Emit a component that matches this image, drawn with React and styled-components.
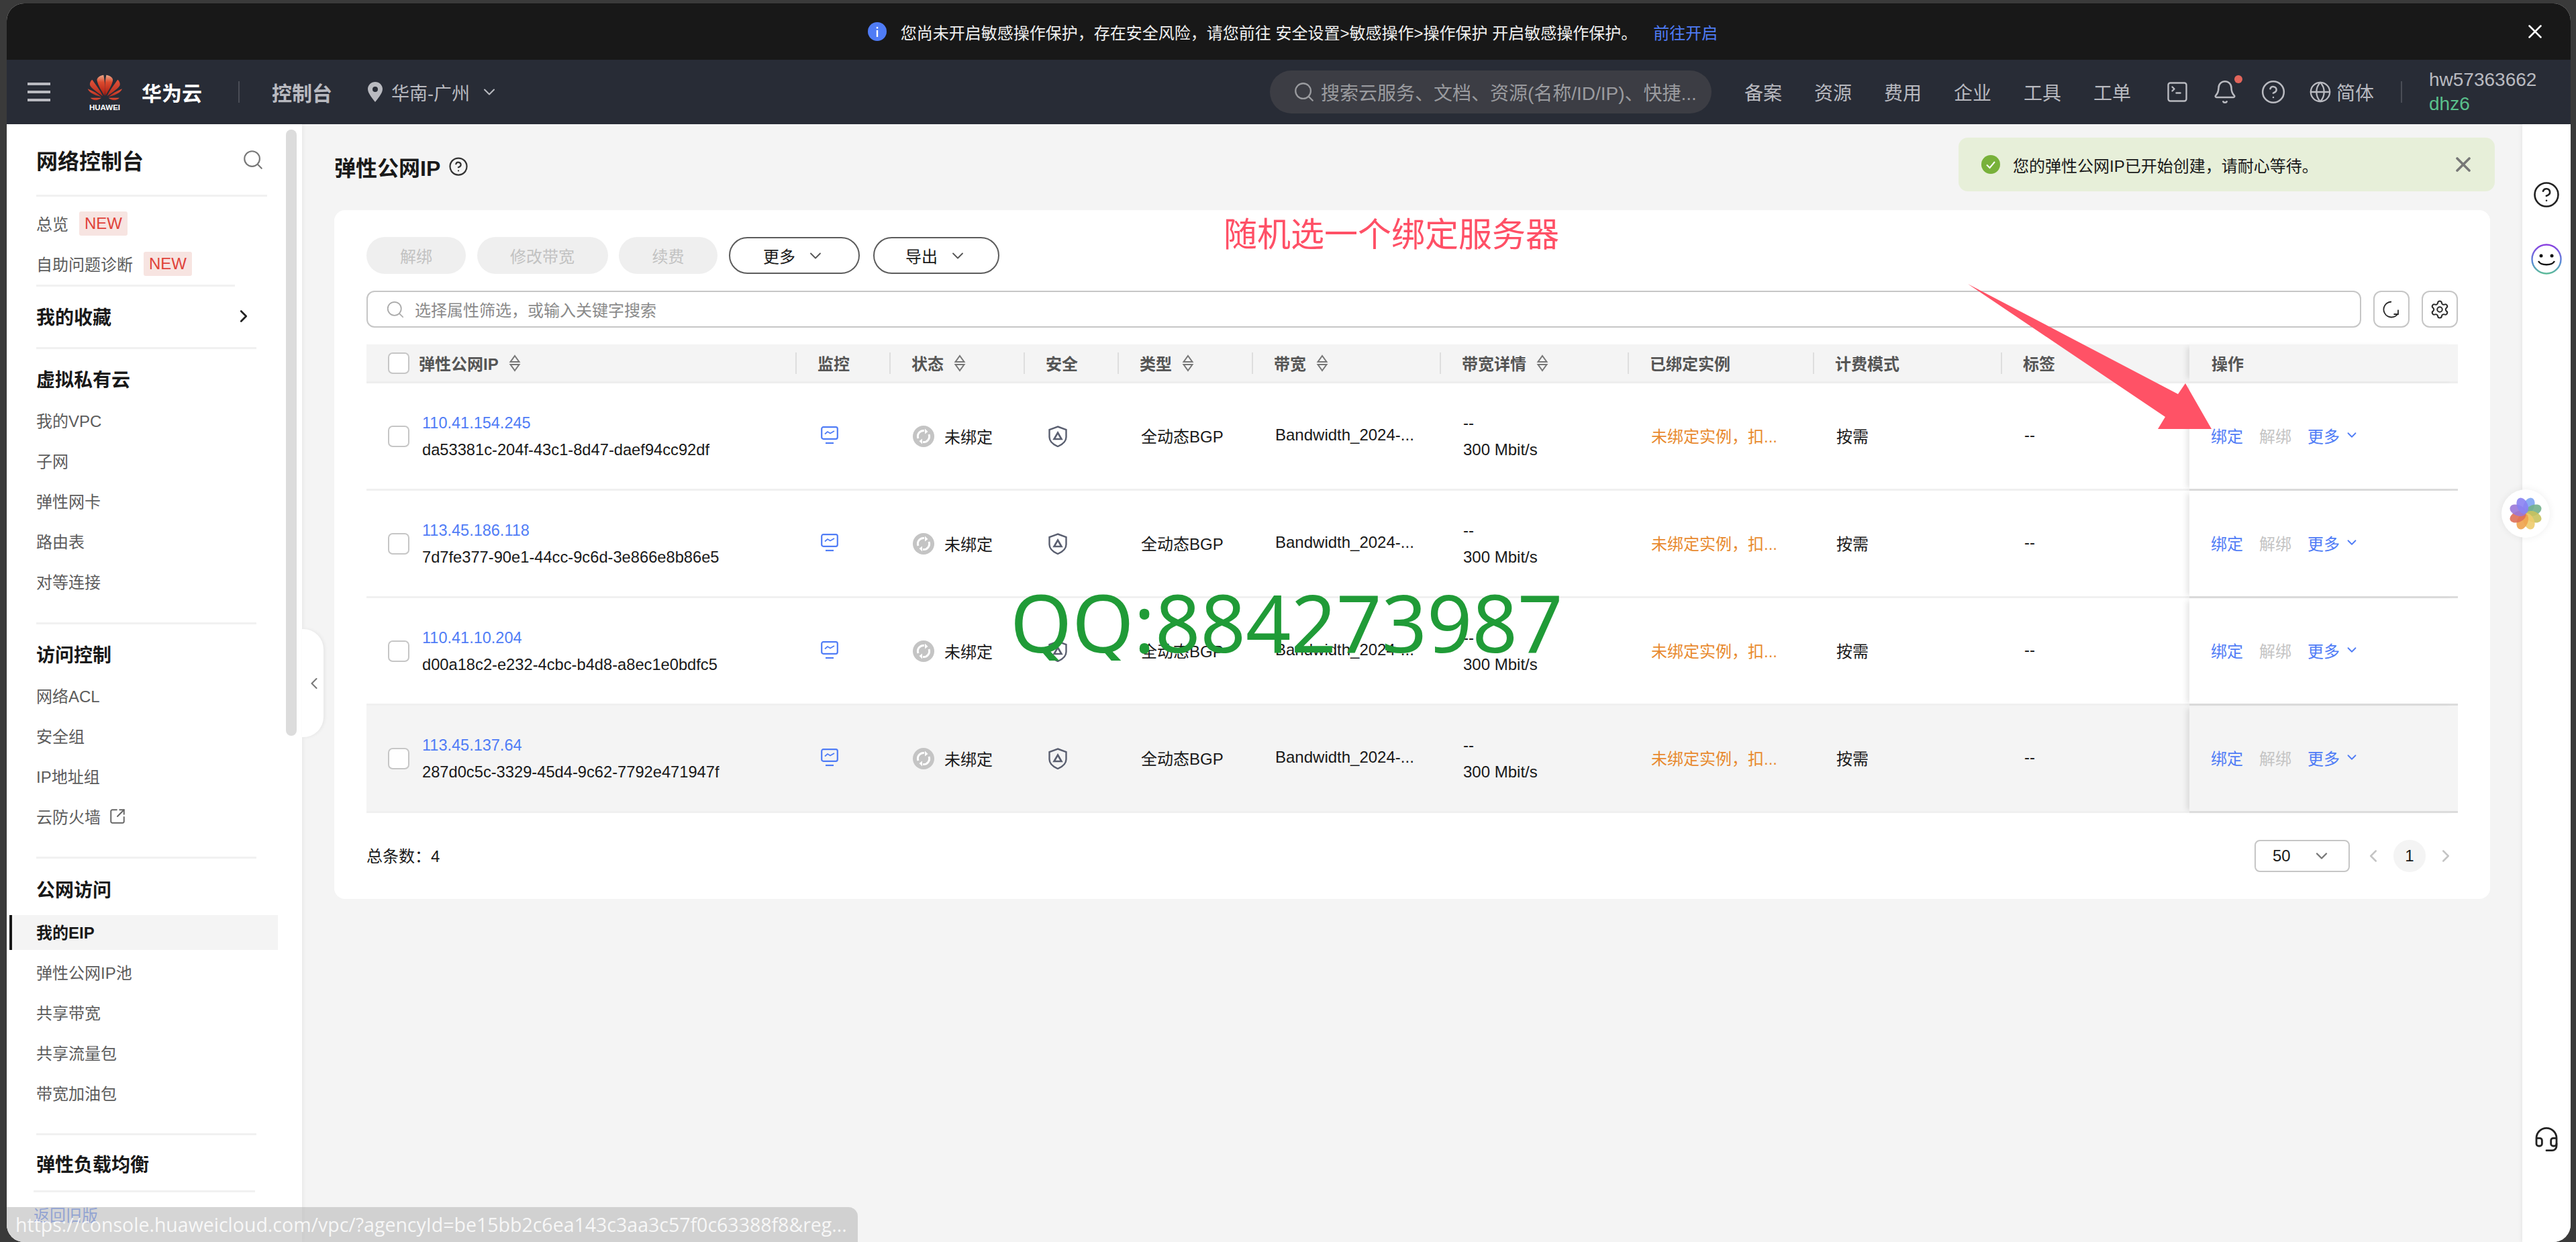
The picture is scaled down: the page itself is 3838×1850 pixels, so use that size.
import React from "react";
import styled, { createGlobalStyle } from "styled-components";
import {
  Search,
  ChevronDown,
  ChevronLeft,
  ChevronRight,
  CircleHelp,
  Globe,
  Bell,
  SquareTerminal,
  X,
  SquareArrowOutUpRight,
  Settings,
  Headset,
} from "lucide-react";

const FONT = '"Liberation Sans", "Noto Sans CJK SC", sans-serif';

const GlobalStyle = createGlobalStyle`
  html, body {
    margin: 0;
    padding: 0;
    background: #3a3a3a;
    font-family: ${FONT};
  }
  * { box-sizing: border-box; }
`;

const Frame = styled.div`
  position: relative;
  width: 3838px;
  height: 1850px;
  padding: 5px 8px 0 10px;
  background: #3a3a3a;
  overflow: hidden;
`;

const Shell = styled.div`
  position: relative;
  display: flex;
  flex-direction: column;
  height: 1845px;
  border-radius: 26px;
  overflow: hidden;
  background: #f4f4f4;
`;

/* top notice */
const Notice = styled.div`
  position: relative;
  flex: none;
  height: 84px;
  display: flex;
  align-items: center;
  justify-content: center;
  padding-left: 12px;
  background: #181818;
  color: #f0f0f0;
  font-size: 24px;
`;

const NoticeText = styled.span`
  margin-left: 21px;
`;

const NoticeLink = styled.span`
  margin-left: 24px;
  color: #4f7cf6;
`;

const NoticeClose = styled.span`
  position: absolute;
  right: 36px;
  top: 25px;
  display: flex;
  color: #fff;
`;

/* header */
const Header = styled.header`
  flex: none;
  height: 96px;
  display: flex;
  align-items: center;
  padding: 0 49px 0 31px;
  background: #282c36;
  color: #b9bac0;
  font-size: 28px;
`;

const Burger = styled.div`
  display: flex;
  flex-direction: column;
  justify-content: space-between;
  width: 34px;
  height: 28px;
  span {
    height: 4px;
    background: #b9bac0;
  }
`;

const LogoBox = styled.div`
  display: flex;
  flex-direction: column;
  align-items: center;
  width: 54px;
  margin-left: 54px;
  margin-top: 2px;
`;

const LogoWord = styled.span`
  margin-top: 3px;
  color: #fff;
  font-size: 11.5px;
  line-height: 12px;
  font-weight: 700;
`;

const Brand = styled.span`
  margin-left: 28px;
  color: #fff;
  font-size: 30px;
  font-weight: 700;
`;

const VLine = styled.i`
  display: block;
  width: 2px;
  height: 32px;
  background: #4a4d56;
  margin: ${(p) => p.$margin};
`;

const Console = styled.span`
  font-size: 30px;
  font-weight: 700;
`;

const Region = styled.div`
  display: flex;
  align-items: center;
  margin-left: 53px;
  font-size: 27px;
`;

const RegionName = styled.span`
  margin: 0 15px 0 13px;
`;

const SearchPill = styled.div`
  display: flex;
  align-items: center;
  gap: 8px;
  width: 658px;
  height: 64px;
  margin-left: auto;
  padding-left: 34px;
  border-radius: 32px;
  background: #3c3d44;
  color: #9a9b9f;
  white-space: nowrap;
`;

const NavLinks = styled.nav`
  display: flex;
  gap: 48px;
  margin-left: 49px;
`;

const HeaderIcons = styled.div`
  display: flex;
  align-items: center;
  gap: 34px;
  margin-left: 51px;
`;

const BellWrap = styled.div`
  position: relative;
  display: flex;
`;

const BellDot = styled.i`
  position: absolute;
  right: -7px;
  top: -6px;
  width: 12px;
  height: 12px;
  border-radius: 50%;
  background: #e2655b;
`;

const Lang = styled.div`
  display: flex;
  align-items: center;
  gap: 7px;
`;

const UserBox = styled.div`
  width: 162px;
  line-height: 36px;
`;

const UserSub = styled.div`
  color: #5ac08c;
`;

/* body */
const Body = styled.div`
  position: relative;
  flex: 1;
  min-height: 0;
  display: flex;
`;

const Sidebar = styled.aside`
  position: relative;
  flex: none;
  width: 440px;
  background: #fff;
  box-shadow: 2px 0 6px rgba(0, 0, 0, 0.05);
  overflow: hidden;
`;

const ScrollThumb = styled.i`
  position: absolute;
  left: 416px;
  top: 8px;
  width: 16px;
  height: 903px;
  border-radius: 8px;
  background: #dcdcdc;
`;

const SideHead = styled.div`
  display: flex;
  align-items: center;
  justify-content: space-between;
  height: 105px;
  padding: 0 56px 0 44px;
  color: #191919;
  font-size: 32px;
  font-weight: 700;
`;

const Divider = styled.div`
  width: ${(p) => p.$width}px;
  height: 3px;
  margin-left: ${(p) => p.$left || 44}px;
  background: #f1f1f1;
`;

const SideItem = styled.div`
  display: flex;
  align-items: center;
  gap: ${(p) => p.$gap || 16}px;
  height: 60px;
  padding: 0 0 3px 44px;
  color: #5c5c5c;
  font-size: 24px;
`;

const ActiveItem = styled.div`
  display: flex;
  align-items: center;
  width: 400px;
  height: 52px;
  margin: 4px 0 4px 4px;
  padding: 0 0 3px 36px;
  border-left: 4px solid #191919;
  background: #f4f4f4;
  color: #191919;
  font-size: 24px;
  font-weight: 700;
`;

const NewTag = styled.span`
  display: flex;
  align-items: center;
  justify-content: center;
  width: 72px;
  height: 36px;
  border-radius: 3px;
  background: #f7e4e1;
  color: #e0423a;
  font-size: 24px;
`;

const SideGroupTitle = styled.div`
  display: flex;
  align-items: center;
  justify-content: space-between;
  height: ${(p) => p.$height ?? 64}px;
  margin-top: ${(p) => p.$top ?? 13}px;
  padding: 0 72px 3px 44px;
  color: #191919;
  font-size: 28px;
  font-weight: 700;
`;

const SideGap = styled.div`
  height: ${(p) => p.$h}px;
`;

const OldVersion = styled.div`
  margin: 15px 0 0 40px;
  color: #4f7cf6;
  font-size: 24px;
`;

const Handle = styled.div`
  position: absolute;
  left: 440px;
  top: 752px;
  display: flex;
  align-items: center;
  width: 32px;
  height: 161px;
  padding-left: 4px;
  border-radius: 0 30px 30px 0;
  background: #fff;
  color: #777;
  box-shadow: 2px 0 5px rgba(0, 0, 0, 0.06);
`;

/* main */
const Main = styled.main`
  position: relative;
  flex: 1;
  min-width: 0;
  padding: 0 48px;
`;

const TitleRow = styled.div`
  display: flex;
  align-items: center;
  gap: 12px;
  height: 128px;
  padding-bottom: 3px;
  color: #191919;
  font-size: 32px;
  font-weight: 700;
`;

const Toast = styled.div`
  position: absolute;
  left: 2468px;
  top: 20px;
  display: flex;
  align-items: center;
  width: 799px;
  height: 80px;
  padding: 0 29px 0 34px;
  border-radius: 14px;
  background: #e7efd9;
  color: #191919;
  font-size: 24px;
`;

const ToastText = styled.span`
  margin-left: 19px;
`;

const ToastClose = styled.span`
  display: flex;
  margin-left: auto;
  color: #777;
`;

const Card = styled.section`
  height: 1026px;
  padding: 40px 48px;
  border-radius: 16px;
  background: #fff;
`;

const Toolbar = styled.div`
  display: flex;
  gap: 16.5px;
`;

const PillButton = styled.button`
  display: flex;
  align-items: center;
  justify-content: center;
  gap: 16px;
  width: ${(p) => p.$width}px;
  height: 55px;
  margin-left: ${(p) => p.$left || 0}px;
  padding: 0;
  border: ${(p) => (p.$ghost ? "none" : "2.5px solid #5c5c5c")};
  border-radius: 28px;
  background: ${(p) => (p.$ghost ? "#efefef" : "#fff")};
  color: ${(p) => (p.$ghost ? "#c2c2c2" : "#191919")};
  font-family: ${FONT};
  font-size: 24px;
`;

const FilterRow = styled.div`
  display: flex;
  gap: 18px;
  margin-top: 25px;
`;

const FilterBox = styled.div`
  flex: 1;
  display: flex;
  align-items: center;
  gap: 14px;
  height: 55px;
  padding-left: 26px;
  border: 2.5px solid #c6c6c6;
  border-radius: 12px;
  color: #8a8a8a;
  font-size: 24px;
`;

const SquareButton = styled.div`
  display: flex;
  align-items: center;
  justify-content: center;
  width: 54px;
  height: 55px;
  border: 2.5px solid #c6c6c6;
  border-radius: 12px;
  color: #2a2a2a;
`;

const Table = styled.div`
  margin-top: 25px;
`;

const COLUMNS = "639px 140px 200px 140px 200px 280px 280px 276px 280px 281px 400px";

const HeadRow = styled.div`
  display: grid;
  grid-template-columns: ${COLUMNS};
  height: 58px;
  border-bottom: 3px solid #eeeeee;
  background: #f4f4f4;
`;

const HeadCell = styled.div`
  position: relative;
  display: flex;
  align-items: center;
  gap: 14px;
  padding-left: ${(p) => p.$pad || 33}px;
  color: #555;
  font-size: 24px;
  font-weight: 700;
  &::before {
    content: "";
    display: ${(p) => (p.$plain ? "none" : "block")};
    position: absolute;
    left: 0;
    top: 12px;
    height: 32px;
    width: 2px;
    background: #dedede;
  }
`;

const FixedHead = styled(HeadCell)`
  box-shadow: -8px 0 8px -4px rgba(0, 0, 0, 0.1);
  &::before {
    display: none;
  }
`;

const Check = styled.i`
  display: block;
  flex: none;
  width: 32px;
  height: 32px;
  border: 2.5px solid #c6c6c6;
  border-radius: 7px;
  background: #fff;
`;

const Row = styled.div`
  display: grid;
  grid-template-columns: ${COLUMNS};
  height: 160px;
  border-bottom: 3px solid #f0f0f0;
  background: ${(p) => (p.$hover ? "#f4f4f4" : "#fff")};
  color: #191919;
  font-size: 24px;
`;

const Cell = styled.div`
  display: flex;
  align-items: center;
  padding-left: ${(p) => p.$pad || 35}px;
  padding-bottom: ${(p) => (p.$lift ? 3 : 0)}px;
  white-space: nowrap;
`;

const IpCell = styled(Cell)`
  gap: 19px;
  padding-left: 32px;
`;

const Stack = styled.div`
  display: flex;
  flex-direction: column;
  line-height: 40px;
`;

const IpLink = styled.span`
  color: #4f7cf6;
  font-size: 23.5px;
`;

const IpId = styled.span`
  font-size: 23.7px;
`;

const StatusCell = styled(Cell)`
  gap: 15px;
`;

const OrangeText = styled.span`
  color: #e88a2e;
`;

const ActionCell = styled(Cell)`
  gap: 24px;
  margin-bottom: -3px;
  border-bottom: 3px solid #dcdcdc;
  box-shadow: -8px 0 8px -4px rgba(0, 0, 0, 0.1);
`;

const ActionLink = styled.span`
  display: flex;
  align-items: center;
  gap: 7px;
  color: ${(p) => (p.$off ? "#c4c4c4" : "#4f7cf6")};
`;

const Footer = styled.div`
  display: flex;
  align-items: center;
  margin-top: 40px;
  height: 48px;
  padding-right: 3px;
  color: #191919;
  font-size: 24px;
`;

const Total = styled.span`
  margin-bottom: 4px;
`;

const PageSelect = styled.div`
  display: flex;
  align-items: center;
  justify-content: space-between;
  width: 142px;
  height: 48px;
  margin-left: auto;
  padding: 0 26px 0 25px;
  border: 2.5px solid #c6c6c6;
  border-radius: 8px;
`;

const PageNum = styled.span`
  display: flex;
  align-items: center;
  justify-content: center;
  width: 48px;
  height: 48px;
  margin: 0 15px;
  border-radius: 50%;
  background: #f4f4f4;
`;

const PagerArrow = styled.span`
  display: flex;
  margin-left: ${(p) => p.$left || 0}px;
  color: #c4c4c4;
`;

/* right rail */
const Rail = styled.aside`
  flex: none;
  width: 72px;
  display: flex;
  flex-direction: column;
  align-items: center;
  padding: 84px 0 133px;
  background: #fff;
  box-shadow: -2px 0 5px rgba(0, 0, 0, 0.05);
`;

const RailTop = styled.div`
  display: flex;
  flex-direction: column;
  align-items: center;
  gap: 52px;
  color: #222;
`;

const RailBottom = styled.div`
  display: flex;
  margin-top: auto;
  color: #222;
`;

const FlowerButton = styled.div`
  position: absolute;
  right: 31px;
  top: 544px;
  display: flex;
  align-items: center;
  justify-content: center;
  width: 72px;
  height: 72px;
  border-radius: 50%;
  background: #fff;
  box-shadow: 0 0 12px rgba(0, 0, 0, 0.07);
`;

/* overlays */
const UrlBar = styled.div`
  position: absolute;
  left: 0;
  bottom: 0;
  width: 1268px;
  height: 52px;
  padding: 0 6px 0 13px;
  border-radius: 0 14px 0 0;
  background: rgba(188, 188, 188, 0.62);
  color: rgba(255, 255, 255, 0.85);
  font-family: "Open Sans", "Noto Sans", sans-serif;
  font-size: 28.5px;
  line-height: 52px;
  white-space: nowrap;
  overflow: hidden;
`;

const Note = styled.div`
  position: absolute;
  left: 1823px;
  top: 322px;
  color: #ff5066;
  font-size: 50px;
  line-height: 56px;
  white-space: nowrap;
`;

const ArrowMark = styled.svg`
  position: absolute;
  left: 0;
  top: 0;
  pointer-events: none;
`;

const Watermark = styled.div`
  position: absolute;
  left: 1505px;
  top: 884px;
  height: 100px;
  overflow: hidden;
  color: #209b37;
  font-family: "Noto Sans", sans-serif;
  font-size: 118px;
  line-height: 86px;
  white-space: nowrap;
`;

function HuaweiLogo() {
  const petals = [
    "M134 118 C118 92 100 62 101 46 C104 36 118 28 130 27 C136 55 138 90 134 118Z",
    "M127 120 C105 105 75 85 70 72 C68 62 74 52 80 48 C95 70 115 95 127 120Z",
    "M121 124 C100 118 68 110 60 88 C85 98 105 110 121 124Z",
    "M120 128 C105 141 85 142 72 128 Z",
  ];
  return (
    <svg width="53" height="40" viewBox="58 25 157 118">
      <defs>
        <linearGradient id="hw" x1="0" y1="0" x2="0" y2="1">
          <stop offset="0" stopColor="#e9a88a" />
          <stop offset="0.35" stopColor="#dc4a2e" />
          <stop offset="1" stopColor="#a81c12" />
        </linearGradient>
        <linearGradient id="hwLow" x1="0" y1="0" x2="0" y2="1">
          <stop offset="0" stopColor="#e0533a" />
          <stop offset="1" stopColor="#b32a1c" />
        </linearGradient>
      </defs>
      {petals.map((d, i) => (
        <g key={d}>
          <path d={d} fill={i < 1 ? "url(#hw)" : "url(#hwLow)"} />
          <path d={d} fill={i < 1 ? "url(#hw)" : "url(#hwLow)"} transform="matrix(-1 0 0 1 272 0)" />
        </g>
      ))}
    </svg>
  );
}

function Pin() {
  return (
    <svg width="22" height="30" viewBox="0 0 22 30">
      <path
        fillRule="evenodd"
        fill="#b9bac0"
        d="M11 0C5 0 0 4.700 0 10.600 0 17.500 8 26 11 30 14 26 22 17.500 22 10.600 22 4.700 17 0 11 0ZM11 7A4 4 0 1 1 11 15 4 4 0 1 1 11 7Z"
      />
    </svg>
  );
}

function SortIcon() {
  return (
    <svg width="20" height="26" viewBox="0 0 20 26" fill="none" stroke="#777" strokeWidth="2">
      <path d="M10 2 L16.500 11 H3.500 Z" />
      <path d="M10 24 L16.500 15 H3.500 Z" />
    </svg>
  );
}

function MonitorIcon() {
  return (
    <svg width="26" height="27" viewBox="0 0 26 27" fill="none" stroke="#4f7cf6" strokeWidth="2.2">
      <rect x="1.200" y="1.200" width="23.600" height="17.600" rx="2.500" />
      <path d="M6 11.500 L10 8 L14 10.500 L20 7" strokeWidth="1.800" />
      <path d="M7 25 H19" />
    </svg>
  );
}

function StatusIcon() {
  return (
    <svg width="32" height="32" viewBox="0 0 32 32">
      <circle cx="16" cy="16" r="16" fill="#c4c4c4" />
      <g fill="none" stroke="#fff" strokeWidth="3">
        <path d="M8 19 A8.500 8.500 0 0 1 17 7.500" />
        <path d="M24 13 A8.500 8.500 0 0 1 15 24.500" />
      </g>
      <path d="M18 4.500 L22.500 9 L18 12.500 Z" fill="#fff" />
      <path d="M14 19.500 L9.500 23 L14 27.500 Z" fill="#fff" />
    </svg>
  );
}

function ShieldIcon() {
  return (
    <svg width="30" height="32" viewBox="0 0 30 32" fill="none" stroke="#5a5f70">
      <path d="M15 1.500 L27.500 6 V17 C27.500 24 21 28.500 15 31 C9 28.500 2.500 24 2.500 17 V6 Z" strokeWidth="2.400" />
      <path d="M15 10.500 L20.500 20 H9.500 Z" strokeWidth="2.600" />
    </svg>
  );
}

function InfoIcon() {
  return (
    <svg width="28" height="28" viewBox="0 0 28 28">
      <circle cx="14" cy="14" r="14" fill="#4f7cf6" />
      <rect x="12.800" y="12" width="2.400" height="10" fill="#fff" />
      <rect x="12.800" y="7" width="2.400" height="2.600" fill="#fff" />
    </svg>
  );
}

function SuccessIcon() {
  return (
    <svg width="28" height="28" viewBox="0 0 28 28">
      <circle cx="14" cy="14" r="14" fill="#78b13a" />
      <path d="M8 14.500 L12.500 19 L20 10" fill="none" stroke="#fff" strokeWidth="2" />
    </svg>
  );
}

function RefreshIcon() {
  return (
    <svg width="30" height="30" viewBox="0 0 30 30" fill="none" stroke="#2a2a2a" strokeWidth="1.800">
      <path d="M15 3.500 A11.500 11.500 0 1 0 24.500 21.500" />
      <path d="M25 15.500 V22 H18.500" />
    </svg>
  );
}

function SmileIcon() {
  return (
    <svg width="46" height="46" viewBox="0 0 46 46" fill="none">
      <defs>
        <linearGradient id="ring" x1="0.500" y1="0" x2="0.500" y2="1">
          <stop offset="0" stopColor="#8a3fe0" />
          <stop offset="0.6" stopColor="#5a8bd8" />
          <stop offset="1" stopColor="#5dbb9a" />
        </linearGradient>
      </defs>
      <circle cx="23" cy="23" r="21.500" stroke="url(#ring)" strokeWidth="2.400" />
      <circle cx="15" cy="18" r="2.500" fill="#111" />
      <circle cx="31" cy="18" r="2.500" fill="#111" />
      <path d="M11 26 C15 33 31 33 35 26" stroke="#111" strokeWidth="2.400" />
    </svg>
  );
}

function FlowerIcon() {
  const colors = ["#7da4f2", "#73b08c", "#c8c25e", "#eecb6d", "#eea24c", "#de6f58", "#9a78d8", "#8a82f2"];
  return (
    <svg width="50" height="50" viewBox="-25 -25 50 50">
      {colors.map((c, i) => (
        <ellipse
          key={c}
          cx="0"
          cy="-12.500"
          rx="8"
          ry="12.500"
          fill={c}
          fillOpacity="0.9"
          transform={`rotate(${22.5 + i * 45})`}
        />
      ))}
    </svg>
  );
}

const eips = [
  { ip: "110.41.154.245", id: "da53381c-204f-43c1-8d47-daef94cc92df" },
  { ip: "113.45.186.118", id: "7d7fe377-90e1-44cc-9c6d-3e866e8b86e5" },
  { ip: "110.41.10.204", id: "d00a18c2-e232-4cbc-b4d8-a8ec1e0bdfc5" },
  { ip: "113.45.137.64", id: "287d0c5c-3329-45d4-9c62-7792e471947f", hover: true },
];

const heads = [
  { label: "监控" },
  { label: "状态", sort: true },
  { label: "安全" },
  { label: "类型", sort: true },
  { label: "带宽", sort: true },
  { label: "带宽详情", sort: true },
  { label: "已绑定实例" },
  { label: "计费模式" },
  { label: "标签" },
];

export default function App() {
  return (
    <Frame>
      <GlobalStyle />
      <Shell>
        <Notice>
          <InfoIcon />
          <NoticeText>
            您尚未开启敏感操作保护，存在安全风险，请您前往 安全设置&gt;敏感操作&gt;操作保护 开启敏感操作保护。
          </NoticeText>
          <NoticeLink>前往开启</NoticeLink>
          <NoticeClose>
            <X size={34} strokeWidth={1.8} />
          </NoticeClose>
        </Notice>

        <Header>
          <Burger>
            <span />
            <span />
            <span />
          </Burger>
          <LogoBox>
            <HuaweiLogo />
            <LogoWord>HUAWEI</LogoWord>
          </LogoBox>
          <Brand>华为云</Brand>
          <VLine $margin="0 48px 0 54px" />
          <Console>控制台</Console>
          <Region>
            <Pin />
            <RegionName>华南-广州</RegionName>
            <ChevronDown size={28} strokeWidth={1.8} />
          </Region>
          <SearchPill>
            <Search size={34} strokeWidth={1.6} />
            搜索云服务、文档、资源(名称/ID/IP)、快捷...
          </SearchPill>
          <NavLinks>
            <span>备案</span>
            <span>资源</span>
            <span>费用</span>
            <span>企业</span>
            <span>工具</span>
            <span>工单</span>
          </NavLinks>
          <HeaderIcons>
            <SquareTerminal size={36} strokeWidth={1.6} />
            <BellWrap>
              <Bell size={38} strokeWidth={1.6} />
              <BellDot />
            </BellWrap>
            <CircleHelp size={38} strokeWidth={1.6} />
            <Lang>
              <Globe size={34} strokeWidth={1.6} />
              简体
            </Lang>
          </HeaderIcons>
          <VLine $margin="0 40px" />
          <UserBox>
            hw57363662
            <UserSub>dhz6</UserSub>
          </UserBox>
        </Header>

        <Body>
          <Sidebar>
            <ScrollThumb />
            <SideHead>
              网络控制台
              <Search size={34} strokeWidth={1.5} color="#777" />
            </SideHead>
            <Divider $width={344} />
            <SideGap $h={11} />
            <SideItem>
              总览
              <NewTag>NEW</NewTag>
            </SideItem>
            <SideItem>
              自助问题诊断
              <NewTag>NEW</NewTag>
            </SideItem>
            <Divider $width={296} />
            <SideGroupTitle $top={0} $height={90}>
              我的收藏
              <ChevronRight size={30} strokeWidth={2.2} color="#222" />
            </SideGroupTitle>
            <Divider $width={328} />
            <SideGroupTitle $top={14} $height={63}>虚拟私有云</SideGroupTitle>
            <SideItem>我的VPC</SideItem>
            <SideItem>子网</SideItem>
            <SideItem>弹性网卡</SideItem>
            <SideItem>路由表</SideItem>
            <SideItem>对等连接</SideItem>
            <SideGap $h={30} />
            <Divider $width={328} />
            <SideGroupTitle>访问控制</SideGroupTitle>
            <SideItem>网络ACL</SideItem>
            <SideItem>安全组</SideItem>
            <SideItem>IP地址组</SideItem>
            <SideItem $gap={12}>
              云防火墙
              <SquareArrowOutUpRight size={26} strokeWidth={1.8} color="#666" />
            </SideItem>
            <SideGap $h={29} />
            <Divider $width={328} />
            <SideGroupTitle $height={67}>公网访问</SideGroupTitle>
            <ActiveItem>我的EIP</ActiveItem>
            <SideItem>弹性公网IP池</SideItem>
            <SideItem>共享带宽</SideItem>
            <SideItem>共享流量包</SideItem>
            <SideItem>带宽加油包</SideItem>
            <SideGap $h={29} />
            <Divider $width={328} />
            <SideGroupTitle $top={11}>弹性负载均衡</SideGroupTitle>
            <SideGap $h={7} />
            <Divider $width={330} $left={40} />
            <OldVersion>返回旧版</OldVersion>
          </Sidebar>
          <Handle>
            <ChevronLeft size={28} strokeWidth={1.8} />
          </Handle>

          <Main>
            <TitleRow>
              弹性公网IP
              <CircleHelp size={30} strokeWidth={1.8} color="#333" />
            </TitleRow>
            <Toast>
              <SuccessIcon />
              <ToastText>您的弹性公网IP已开始创建，请耐心等待。</ToastText>
              <ToastClose>
                <X size={36} strokeWidth={2.4} />
              </ToastClose>
            </Toast>
            <Card>
              <Toolbar>
                <PillButton $ghost $width={148}>解绑</PillButton>
                <PillButton $ghost $width={195}>修改带宽</PillButton>
                <PillButton $ghost $width={147}>续费</PillButton>
                <PillButton $width={195}>
                  更多
                  <ChevronDown size={28} strokeWidth={1.6} color="#555" />
                </PillButton>
                <PillButton $width={188} $left={4}>
                  导出
                  <ChevronDown size={28} strokeWidth={1.6} color="#555" />
                </PillButton>
              </Toolbar>
              <FilterRow>
                <FilterBox>
                  <Search size={30} strokeWidth={1.4} color="#aaa" />
                  选择属性筛选，或输入关键字搜索
                </FilterBox>
                <SquareButton>
                  <RefreshIcon />
                </SquareButton>
                <SquareButton>
                  <Settings size={30} strokeWidth={1.6} />
                </SquareButton>
              </FilterRow>
              <Table>
                <HeadRow>
                  <HeadCell $plain $pad={32}>
                    <Check />
                    弹性公网IP
                    <SortIcon />
                  </HeadCell>
                  {heads.map((h) => (
                    <HeadCell key={h.label}>
                      {h.label}
                      {h.sort && <SortIcon />}
                    </HeadCell>
                  ))}
                  <FixedHead>操作</FixedHead>
                </HeadRow>
                {eips.map((e) => (
                  <Row key={e.ip} $hover={e.hover}>
                    <IpCell>
                      <Check />
                      <Stack>
                        <IpLink>{e.ip}</IpLink>
                        <IpId>{e.id}</IpId>
                      </Stack>
                    </IpCell>
                    <Cell $pad={38} $lift>
                      <MonitorIcon />
                    </Cell>
                    <StatusCell>
                      <StatusIcon />
                      未绑定
                    </StatusCell>
                    <Cell $pad={36}>
                      <ShieldIcon />
                    </Cell>
                    <Cell $lift>全动态BGP</Cell>
                    <Cell $lift>Bandwidth_2024-...</Cell>
                    <Cell>
                      <Stack>
                        <span>--</span>
                        <span>300 Mbit/s</span>
                      </Stack>
                    </Cell>
                    <Cell $lift>
                      <OrangeText>未绑定实例，扣...</OrangeText>
                    </Cell>
                    <Cell $lift>按需</Cell>
                    <Cell $lift>--</Cell>
                    <ActionCell $pad={32} $lift>
                      <ActionLink>绑定</ActionLink>
                      <ActionLink $off>解绑</ActionLink>
                      <ActionLink>
                        更多
                        <ChevronDown size={22} strokeWidth={2} />
                      </ActionLink>
                    </ActionCell>
                  </Row>
                ))}
              </Table>
              <Footer>
                <Total>总条数：4</Total>
                <PageSelect>
                  50
                  <ChevronDown size={28} strokeWidth={2} color="#777" />
                </PageSelect>
                <PagerArrow $left={20}>
                  <ChevronLeft size={30} strokeWidth={2} />
                </PagerArrow>
                <PageNum>1</PageNum>
                <PagerArrow>
                  <ChevronRight size={30} strokeWidth={2} />
                </PagerArrow>
              </Footer>
            </Card>
          </Main>

          <Rail>
            <RailTop>
              <CircleHelp size={42} strokeWidth={1.5} />
              <SmileIcon />
            </RailTop>
            <RailBottom>
              <Headset size={40} strokeWidth={1.7} />
            </RailBottom>
          </Rail>
          <FlowerButton>
            <FlowerIcon />
          </FlowerButton>
        </Body>
        <UrlBar>https://console.huaweicloud.com/vpc/?agencyId=be15bb2c6ea143c3aa3c57f0c63388f8&amp;reg...</UrlBar>
      </Shell>

      <Note>随机选一个绑定服务器</Note>
      <ArrowMark width="3838" height="1850" viewBox="0 0 3838 1850">
        <polygon points="2932,423 3245,587 3256,571 3295,639 3215,639 3226,621" fill="#ff5266" />
      </ArrowMark>
      <Watermark>QQ:884273987</Watermark>
    </Frame>
  );
}
